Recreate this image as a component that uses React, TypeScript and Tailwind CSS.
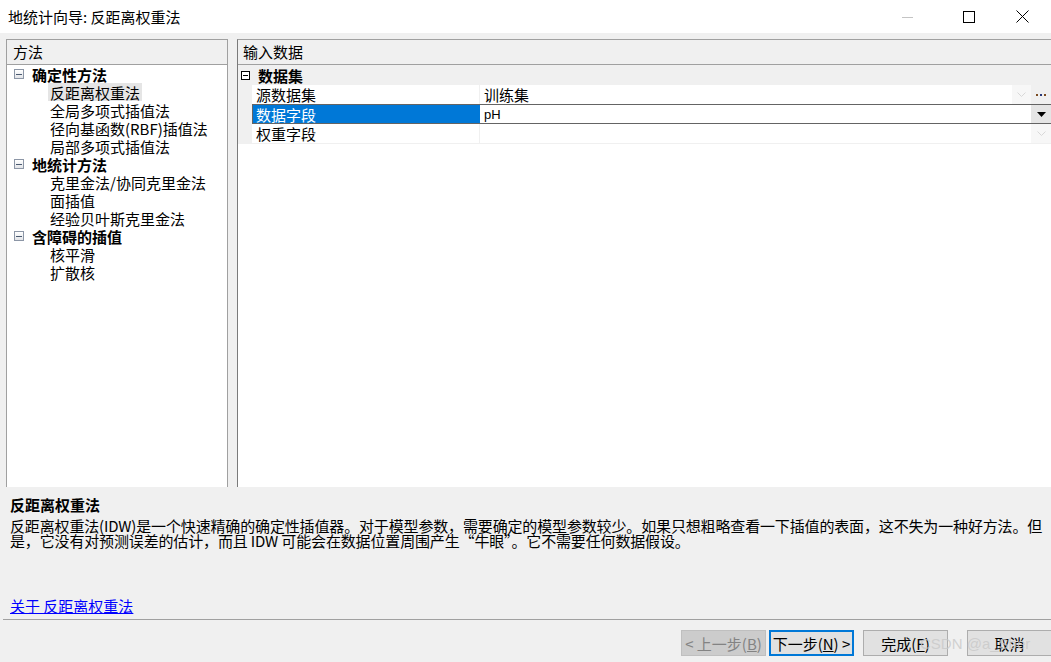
import React from 'react';

const groups = [
  { title: '确定性方法', items: ['反距离权重法', '全局多项式插值法', '径向基函数(RBF)插值法', '局部多项式插值法'] },
  { title: '地统计方法', items: ['克里金法/协同克里金法', '面插值', '经验贝叶斯克里金法'] },
  { title: '含障碍的插值', items: ['核平滑', '扩散核'] },
];

const font = "font-['Noto_Sans_CJK_SC',sans-serif]";

const TreeMinus = () => (
  <div className="w-[10px] h-[10px] border border-[#8c96a6] bg-gradient-to-b from-white to-[#e2e4e8] flex items-center justify-center">
    <div className="w-[6px] h-px bg-[#4a5a70]" />
  </div>
);

const GridMinus = () => (
  <div className="w-[9px] h-[9px] border border-black bg-white flex items-center justify-center">
    <div className="w-[5px] h-px bg-black" />
  </div>
);

const Triangle = ({ faint }: { faint?: boolean }) => (
  <svg width="9" height="5" viewBox="0 0 9 5">
    {faint ? (
      <path d="M0.5 0.5 L4.5 4.5 L8.5 0.5" fill="none" stroke="#d8d8d8" strokeWidth="1" />
    ) : (
      <path d="M0 0 H9 L4.5 5 Z" fill="#000" />
    )}
  </svg>
);

const Button = ({ children, variant }: { children: React.ReactNode; variant?: 'disabled' | 'default' }) => {
  const cls =
    variant === 'disabled'
      ? 'bg-[#cccccc] border border-[#bfbfbf] text-[#838383]'
      : variant === 'default'
        ? 'bg-[#e1e1e1] border-2 border-[#0078d7] text-black'
        : 'bg-[#e1e1e1] border border-[#adadad] text-black';
  return (
    <div className={`w-[85px] h-[26px] flex items-center justify-center text-[15px] leading-none ${cls}`}>
      {children}
    </div>
  );
};

export default function App() {
  return (
    <div className={`relative w-[1051px] h-[662px] overflow-hidden flex flex-col bg-[#f0f0f0] text-black ${font}`}>
      {/* Title bar */}
      <div className="h-[33px] bg-white flex items-center shrink-0">
        <div className="pl-[8px] text-[15px] leading-none flex-1">地统计向导: 反距离权重法</div>
        <div className="flex items-center h-full">
          <div className="w-[62px] h-full flex items-center justify-center">
            <svg width="12" height="12" viewBox="0 0 12 12">
              <path d="M0 6.5 H11" stroke="#c4c4c4" strokeWidth="1" />
            </svg>
          </div>
          <div className="w-[60px] h-full flex items-center justify-center">
            <svg width="12" height="12" viewBox="0 0 12 12">
              <rect x="0.5" y="0.5" width="11" height="11" fill="none" stroke="#000" strokeWidth="1" />
            </svg>
          </div>
          <div className="w-[52px] h-full flex items-center justify-center pr-[6px]">
            <svg width="13" height="13" viewBox="0 0 13 13">
              <path d="M0.5 0.5 L12.5 12.5 M12.5 0.5 L0.5 12.5" stroke="#000" strokeWidth="1" />
            </svg>
          </div>
        </div>
      </div>

      {/* Panels */}
      <div className="flex pt-[6px] pl-[6px] h-[454px] shrink-0">
        {/* Left: methods tree */}
        <div className="w-[222px] h-full border border-[#a0a0a0] border-b-0 flex flex-col">
          <div className="h-[25px] border-b border-[#a0a0a0] bg-[#f0f0f0] flex items-center pl-[6px] text-[15px]">方法</div>
          <div className="flex-1 bg-white pl-[7px]">
            {groups.map((g) => (
              <div key={g.title}>
                <div className="h-[18px] flex items-center">
                  <TreeMinus />
                  <span className="ml-[8px] text-[15px] font-bold leading-none">{g.title}</span>
                </div>
                {g.items.map((item) => (
                  <div key={item} className="h-[18px] flex items-center pl-[34px]">
                    <span
                      className={`px-[2px] h-[18px] flex items-center text-[15px] leading-none ${
                        item === '反距离权重法' ? 'bg-[#e5e5e5]' : ''
                      }`}
                    >
                      {item}
                    </span>
                  </div>
                ))}
              </div>
            ))}
          </div>
        </div>

        {/* Right: property grid */}
        <div className="ml-[9px] flex-1 h-full border-l border-t border-l-[#7a7a7a] border-t-[#a0a0a0] flex flex-col">
          <div className="h-[25px] border-b border-[#a0a0a0] bg-[#f0f0f0] flex items-center pl-[5px] text-[15px]">输入数据</div>
          <div className="flex-1 bg-white flex flex-col">
            <div className="h-[20px] bg-[#f0f0f0] flex items-center pl-[3px]">
              <GridMinus />
              <span className="ml-[8px] text-[15px] font-bold leading-none">数据集</span>
            </div>
            <div className="flex">
              <div className="w-[14px] bg-[#f0f0f0]" />
              <div className="flex-1 flex flex-col">
                {/* row 1 */}
                <div className="h-[20px] flex border-b border-[#646464]">
                  <div className="w-[228px] border-r border-[#f0f0f0] pl-[4px] flex items-center text-[15px] leading-none">源数据集</div>
                  <div className="flex-1 pl-[4px] flex items-center text-[15px] leading-none">训练集</div>
                  <div className="w-[19px] bg-[#f7f7f7] flex items-center justify-center">
                    <Triangle faint />
                  </div>
                  <div className="w-[20px] bg-[#f0f0f0] flex items-center justify-center gap-[2px]">
                    <div className="w-[2px] h-[2px] bg-[#7a4a20]" />
                    <div className="w-[2px] h-[2px] bg-[#2a3a7a]" />
                    <div className="w-[2px] h-[2px] bg-[#7a4a20]" />
                  </div>
                </div>
                {/* row 2 (selected) */}
                <div className="h-[19px] flex border-b border-[#646464]">
                  <div className="w-[228px] bg-[#0078d7] border-l border-[#646464] pl-[3px] flex items-center text-[15px] leading-none text-white">数据字段</div>
                  <div className="flex-1 pl-[4px] flex items-center text-[13px] leading-none font-['Liberation_Sans',sans-serif]">pH</div>
                  <div className="w-[20px] bg-[#e5e5e5] flex items-center justify-center">
                    <Triangle />
                  </div>
                </div>
                {/* row 3 */}
                <div className="h-[20px] flex border-b border-[#f0f0f0]">
                  <div className="w-[228px] border-r border-[#f0f0f0] pl-[4px] flex items-center text-[15px] leading-none">权重字段</div>
                  <div className="flex-1" />
                  <div className="w-[20px] bg-[#f7f7f7] flex items-center justify-center">
                    <Triangle faint />
                  </div>
                </div>
              </div>
            </div>
          </div>
        </div>
      </div>

      {/* Description */}
      <div className="flex-1 flex flex-col pl-[10px] pt-[9px]">
        <div className="text-[15px] font-bold leading-[18px]">反距离权重法</div>
        <div className="mt-[4px] text-[15px] leading-[15px] whitespace-nowrap tracking-[-0.15px]">
          <div>反距离权重法(IDW)是一个快速精确的确定性插值器。对于模型参数，需要确定的模型参数较少。如果只想粗略查看一下插值的表面，这不失为一种好方法。但</div>
          <div>是，它没有对预测误差的估计，而且 IDW 可能会在数据位置周围产生“牛眼”。它不需要任何数据假设。</div>
        </div>
        <div className="flex-1" />
        <div className="text-[15px] leading-[18px] text-[#0000ff] underline mb-[4px]">关于 反距离权重法</div>
      </div>

      {/* Footer */}
      <div className="ml-[3px] border-t border-[#a0a0a0] h-[43px] shrink-0 flex justify-end items-start pt-[10px] -mr-px">
        <Button variant="disabled">
          &lt; 上一步(<span className="underline">B</span>)
        </Button>
        <div className="ml-[3px]">
          <Button variant="default">
            下一步(<span className="underline">N</span>) &gt;
          </Button>
        </div>
        <div className="ml-[9px]">
          <Button>
            完成(<span className="underline">F</span>)
          </Button>
        </div>
        <div className="ml-[19px]">
          <Button>取消</Button>
        </div>
      </div>

      {/* watermark */}
      <div className="absolute left-[920px] top-[636px] text-[15px] leading-none text-[#c8c8c8]/80 font-['Liberation_Sans',sans-serif]">
        CSDN @a_Sber
      </div>
    </div>
  );
}
